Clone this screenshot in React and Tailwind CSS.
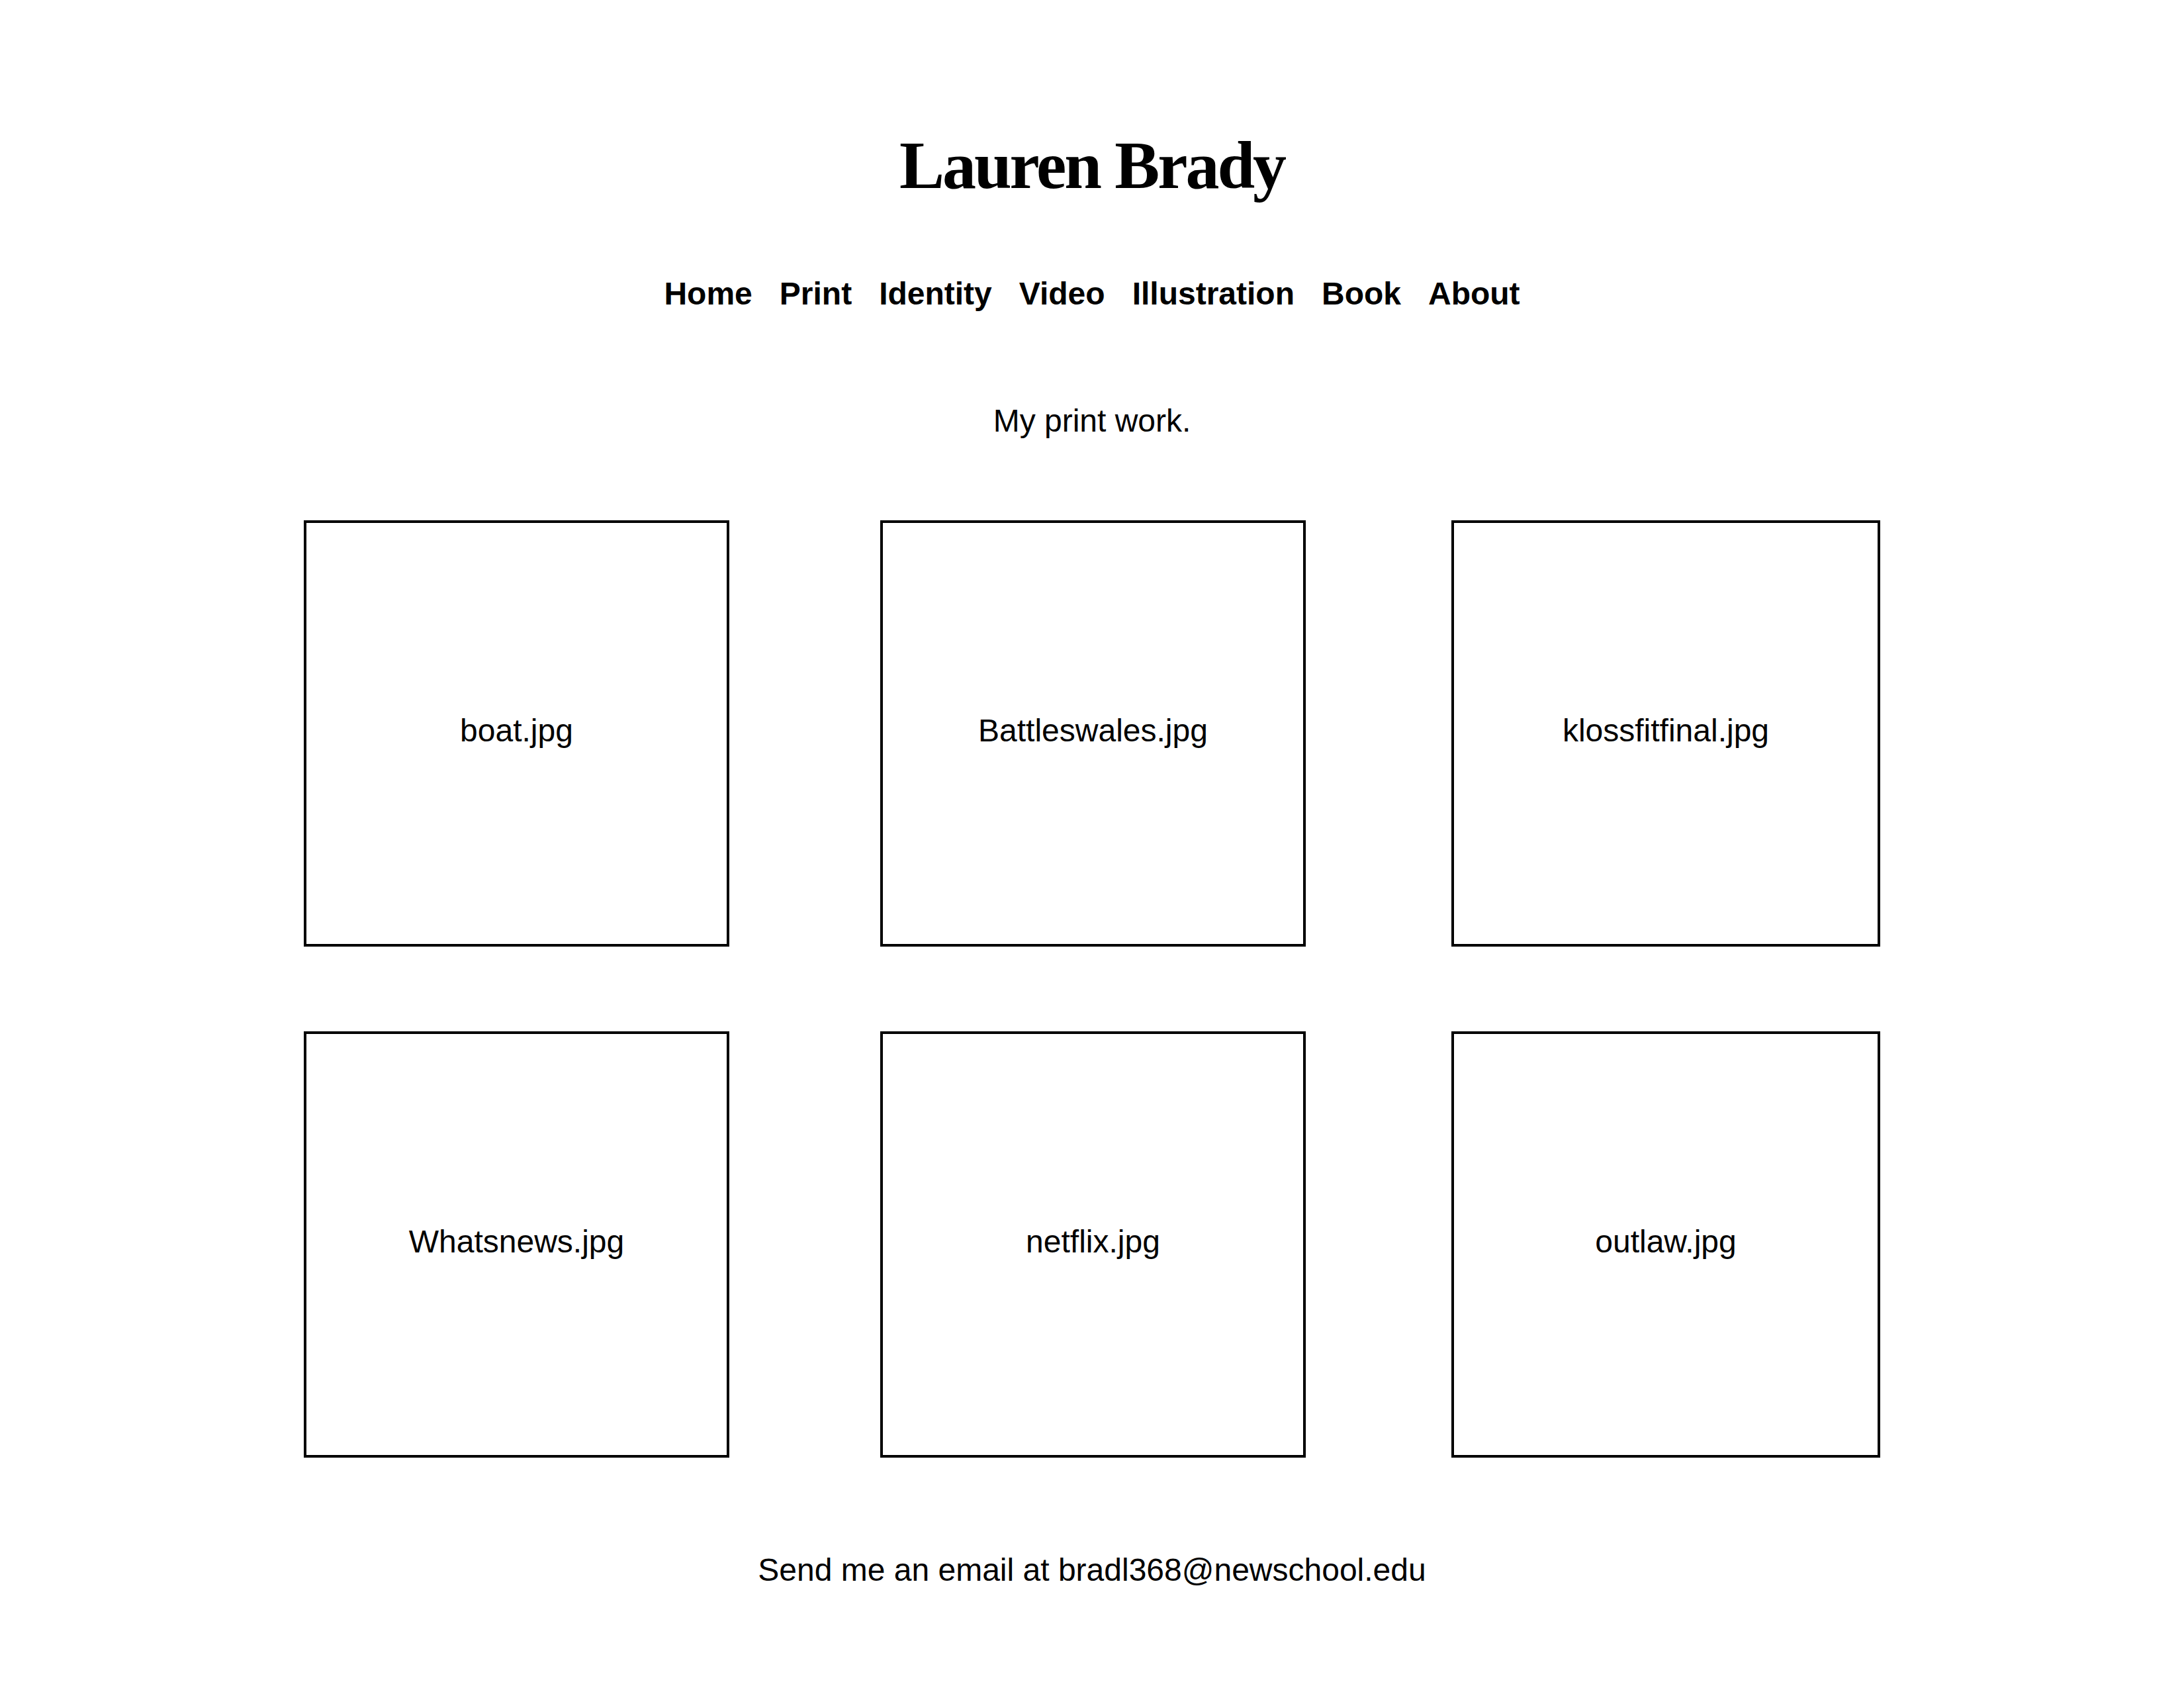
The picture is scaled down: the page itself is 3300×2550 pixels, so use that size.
import React from 'react'

const navLinks = ['Home', 'Print', 'Identity', 'Video', 'Illustration', 'Book', 'About'];

const rows = [
  ['boat.jpg', 'Battleswales.jpg', 'klossfitfinal.jpg'],
  ['Whatsnews.jpg', 'netflix.jpg', 'outlaw.jpg'],
];

// widths and left margins of the three columns
const cols = [
  { w: 'w-[643px]', ml: 'ml-0' },
  { w: 'w-[643px]', ml: 'ml-[228px]' },
  { w: 'w-[648px]', ml: 'ml-[220px]' },
];

const Tile = ({ name, col }) => (
  <div
    className={`${cols[col].w} ${cols[col].ml} h-[644px] border-4 border-black flex items-center justify-center pb-[8px]`}
  >
    <span className="text-[48px] leading-none text-black">{name}</span>
  </div>
);

const App = () => {
  return (
    <div className="min-h-screen w-full bg-white text-black font-['Liberation_Sans',Arial,sans-serif]">
      <div className="flex flex-col items-center pt-[199px]">
        {/* name */}
        <h1 className="font-['Liberation_Serif','Times_New_Roman',serif] font-bold text-[102px] leading-none tracking-[-0.03em]">
          Lauren Brady
        </h1>

        {/* navigation */}
        <nav className="mt-[119px] flex gap-[41px]">
          {navLinks.map((link) => (
            <a key={link} href="#" className="text-[48px] font-bold leading-none text-black">
              {link}
            </a>
          ))}
        </nav>

        <p className="mt-[144px] text-[48px] leading-none">My print work.</p>

        {/* gallery */}
        <div className="mt-[126px] flex flex-col gap-[128px]">
          {rows.map((row, i) => (
            <div key={i} className="flex">
              {row.map((name, j) => (
                <Tile key={name} name={name} col={j} />
              ))}
            </div>
          ))}
        </div>

        <p className="mt-[146px] text-[48px] leading-none">
          Send me an email at bradl368@newschool.edu
        </p>
      </div>
    </div>
  )
}

export default App
